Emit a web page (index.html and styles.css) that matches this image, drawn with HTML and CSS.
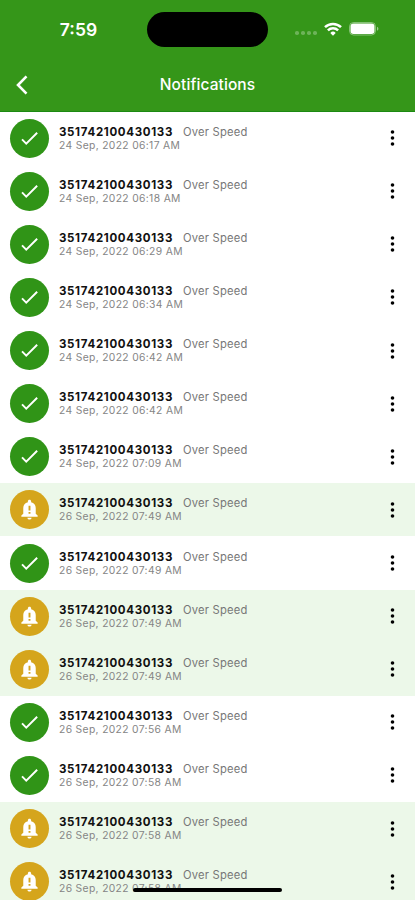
FILE: index.html
```html
<!DOCTYPE html>
<html lang="en">
<head>
    <meta charset="UTF-8">
    <meta name="viewport" content="width=device-width, initial-scale=1.0">
    <title>Notifications</title>
    <link rel="stylesheet" href="styles.css">
</head>
<body>

<!-- Icons -->
<svg class="icon-defs">
    <symbol id="check" viewBox="0 0 24 24">
        <path d="M4.2 12.9l4.4 4.4L20 6" fill="none" stroke="currentColor" stroke-width="2"/>
    </symbol>
    <symbol id="bell" viewBox="0 0 24 24">
        <path fill="currentColor" fill-rule="evenodd" d="M12 22.5c1.2 0 2.200-.9 2.200-2H9.800c0 1.100 1 2 2.200 2zm6.500-6V10.500c0-3.100-1.800-5.300-4.800-6V3.300c0-.9-.7-1.600-1.700-1.600s-1.700.7-1.700 1.600v1.200c-3 .7-4.800 2.900-4.800 6v6l-2 1.800v1.200h17v-1.200zM13 16.500h-2v-2h2zm0-3.500h-2V8h2z"/>
    </symbol>
    <symbol id="dots" viewBox="0 0 4 16">
        <circle cx="2" cy="2" r="1.8"/>
        <circle cx="2" cy="8" r="1.8"/>
        <circle cx="2" cy="14" r="1.8"/>
    </symbol>
</svg>

<div class="screen">
    <header class="header">
        <div class="status-bar">
            <span class="time">7:59</span>
            <div class="island"></div>
            <div class="status-icons">
                <div class="signal"><i></i><i></i><i></i><i></i></div>
                <svg class="wifi" viewBox="0 0 18 14">
                    <path d="M1 5.200a11.500 11.500 0 0 1 16 0M3.900 8.300a7.300 7.300 0 0 1 10.200 0" fill="none" stroke="#fff" stroke-width="2.5"/>
                    <path d="M9 13.800l-2.700-2.900a3.900 3.900 0 0 1 5.400 0z" fill="#fff"/>
                </svg>
                <svg class="battery" viewBox="0 0 30 14">
                    <rect x=".5" y=".5" width="26" height="12.5" rx="4" fill="none" stroke="#fff" stroke-opacity=".4"/>
                    <rect x="1.500" y="1.500" width="24" height="10.500" rx="3" fill="#fff"/>
                    <path d="M28 4.700c1.900.7 1.900 3.400 0 4.100z" fill="#fff" fill-opacity=".5"/>
                </svg>
            </div>
        </div>
        <div class="nav-bar">
            <svg class="back" viewBox="0 0 12 20">
                <path d="M10.500 1.300L2 10l8.500 8.700" fill="none" stroke="#fff" stroke-width="2.6"/>
            </svg>
            <h1>Notifications</h1>
        </div>
    </header>

    <main class="list" id="list"></main>
    <div class="home-indicator"></div>
</div>

<script src="script.js"></script>
</body>
</html>
```
FILE: styles.css
```css
body {
    margin: 0;
    font-family: Inter, "Liberation Sans", sans-serif;
    background-color: #fff;
}

.icon-defs {
    display: none;
}

.screen {
    position: relative;
    height: 900px;
    overflow: hidden;
}

.header {
    height: 111.6px;
    background-color: #359619;
    color: #fff;
    box-sizing: border-box;
    border-bottom: 1px solid #1c8a12;
}

.status-bar {
    height: 58px;
    display: grid;
    grid-template-columns: 1fr 121px 1fr;
    align-items: center;
}

.time {
    padding-left: 10px;
    padding-top: 1px;
    text-align: center;
    font-size: 17.5px;
    font-weight: 600;
    line-height: 20px;
}

.island {
    height: 35px;
    border-radius: 18px;
    background-color: #000;
}

.status-icons {
    display: flex;
    align-items: center;
    padding-left: 27px;
    margin-top: -1px;
}

.signal {
    display: flex;
    gap: 2.5px;
    margin: 9px 7px 0 0;
}

.signal i {
    width: 3.5px;
    height: 3.5px;
    border-radius: 50%;
    background-color: rgba(255, 255, 255, 0.28);
}

.wifi {
    width: 18px;
    height: 14px;
    margin-right: 7px;
}

.battery {
    width: 30px;
    height: 14px;
}

.nav-bar {
    height: 53px;
    display: grid;
    grid-template-columns: 44px 1fr 44px;
    align-items: center;
}

.back {
    width: 12px;
    height: 20px;
    margin-left: 16px;
}

h1 {
    margin: 0;
    text-align: center;
    font-size: 15.5px;
    font-weight: 500;
    line-height: 20px;
    letter-spacing: 0.1px;
}

.row {
    height: 53.12px;
    display: flex;
    align-items: center;
    box-sizing: border-box;
    padding: 0 20px 0 10px;
}

.row.unread {
    background-color: #ecf8e9;
}

.badge {
    width: 39px;
    height: 39px;
    border-radius: 50%;
    background-color: #309417;
    color: #fff;
    display: flex;
    align-items: center;
    justify-content: center;
}

.unread .badge {
    background-color: #d5a51c;
}

.badge svg {
    width: 23px;
    height: 23px;
}

.info {
    flex: 1;
    margin-left: 10px;
    padding-top: 1px;
    white-space: nowrap;
}

.title {
    display: flex;
    gap: 10px;
    line-height: 13px;
    font-size: 11.5px;
}

.device {
    width: 114px;
    font-weight: 700;
    color: #111;
    letter-spacing: 0.67px;
}

.event {
    color: #777;
    font-size: 11.2px;
    letter-spacing: 0.2px;
}

.date {
    font-size: 10.3px;
    line-height: 13px;
    color: #858585;
    letter-spacing: 0.35px;
}

.more {
    width: 5px;
    height: 16px;
}

.home-indicator {
    position: absolute;
    left: 133px;
    bottom: 8px;
    width: 149px;
    height: 4px;
    border-radius: 2px;
    background-color: #000;
}
```
FILE: script.js
```js
const notifications = [
    { date: "24 Sep, 2022 06:17 AM" },
    { date: "24 Sep, 2022 06:18 AM" },
    { date: "24 Sep, 2022 06:29 AM" },
    { date: "24 Sep, 2022 06:34 AM" },
    { date: "24 Sep, 2022 06:42 AM" },
    { date: "24 Sep, 2022 06:42 AM" },
    { date: "24 Sep, 2022 07:09 AM" },
    { date: "26 Sep, 2022 07:49 AM", unread: true },
    { date: "26 Sep, 2022 07:49 AM" },
    { date: "26 Sep, 2022 07:49 AM", unread: true },
    { date: "26 Sep, 2022 07:49 AM", unread: true },
    { date: "26 Sep, 2022 07:56 AM" },
    { date: "26 Sep, 2022 07:58 AM" },
    { date: "26 Sep, 2022 07:58 AM", unread: true },
    { date: "26 Sep, 2022 07:58 AM", unread: true }
];

document.getElementById("list").innerHTML = notifications.map(item => `
    <div class="row ${item.unread ? "unread" : ""}">
        <div class="badge"><svg><use href="#${item.unread ? "bell" : "check"}"/></svg></div>
        <div class="info">
            <div class="title"><span class="device">351742100430133</span><span class="event">Over Speed</span></div>
            <div class="date">${item.date}</div>
        </div>
        <svg class="more"><use href="#dots"/></svg>
    </div>
`).join("");
```
